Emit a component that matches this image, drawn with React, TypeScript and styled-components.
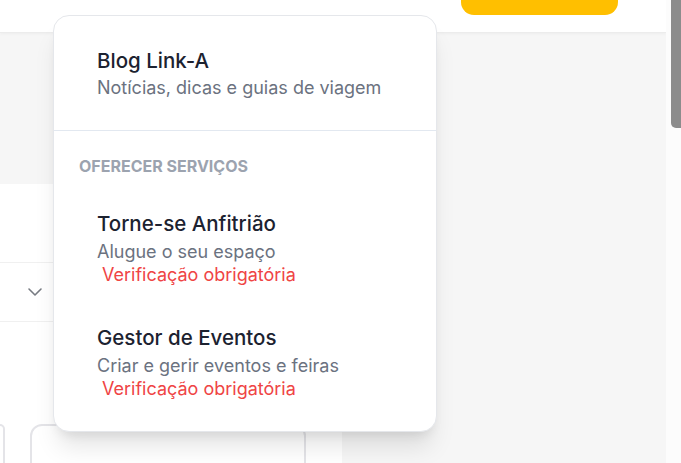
import React from "react";
import styled, { createGlobalStyle } from "styled-components";
import { ChevronDown } from "lucide-react";

const Global = createGlobalStyle`
  html, body { margin: 0; padding: 0; }
  body { font-family: Inter, "Noto Sans", sans-serif; overflow: hidden; }
  * { box-sizing: border-box; }
`;

const Page = styled.div`
  position: relative;
  display: flex;
  width: 681px;
  height: 463px;
  overflow: hidden;
`;

const Main = styled.div`
  flex: 1;
  display: flex;
  flex-direction: column;
  background: #f6f6f6;
`;

const Header = styled.header`
  height: 33px;
  background: #ffffff;
  border-bottom: 1px solid #ececec;
  box-shadow: 0 1px 3px rgba(0, 0, 0, 0.04);
  display: flex;
  justify-content: flex-end;
  padding-right: 48px;
  flex-shrink: 0;
`;

const CtaButton = styled.div`
  width: 157px;
  height: 15px;
  background: #ffbf00;
  border-radius: 0 0 13px 13px;
`;

const Body = styled.div`
  flex: 1;
  padding-top: 151px;
  display: flex;
`;

const Panel = styled.section`
  width: 342px;
  background: #ffffff;
  display: flex;
  flex-direction: column;
`;

const PanelTop = styled.div`
  height: 79px;
  border-bottom: 1px solid #f0f0f0;
`;

const SelectRow = styled.div`
  height: 59px;
  border-bottom: 1px solid #f0f0f0;
  display: flex;
  align-items: center;
  padding-left: 23px;
  color: #777b82;
`;

const CardRow = styled.div`
  display: flex;
  gap: 25px;
  margin-top: 102px;
`;

const Card = styled.div<{ $w: number; $cut?: boolean }>`
  width: ${(p) => p.$w}px;
  height: 60px;
  border: 2px solid #e4e4e8;
  border-left: ${(p) => (p.$cut ? "none" : "2px solid #e4e4e8")};
  border-radius: ${(p) => (p.$cut ? "0 12px 0 0" : "12px")};
  background: #ffffff;
`;

const ScrollTrack = styled.div`
  width: 15px;
  background: #fcfcfc;
  display: flex;
  justify-content: flex-end;
`;

const ScrollThumb = styled.div`
  width: 10px;
  height: 128px;
  background: #8c8c8c;
  border-radius: 0 0 0 5px;
`;

const Dropdown = styled.div`
  position: absolute;
  left: 53px;
  top: 15px;
  width: 384px;
  background: #ffffff;
  border: 1px solid #e5e7eb;
  border-radius: 16px;
  box-shadow: 0 20px 25px -5px rgba(0, 0, 0, 0.1), 0 8px 12px -6px rgba(0, 0, 0, 0.1);
  overflow: hidden;
`;

const BlogItem = styled.div`
  padding: 31px 20px 30px 43px;
`;

const Divider = styled.div`
  height: 1px;
  background: #e2e8f0;
`;

const Section = styled.div`
  padding: 25px 0 12px 0;
`;

const SectionTitle = styled.div`
  padding-left: 25px;
  font-size: 16px;
  line-height: 20px;
  font-weight: 700;
  text-transform: uppercase;
  color: #9ca3af;
  margin-bottom: 15px;
`;

const Item = styled.div`
  padding: 19px 20px 18px 43px;
  display: flex;
  flex-direction: column;
`;

const ItemTitle = styled.div`
  font-size: 20.5px;
  line-height: 28px;
  font-weight: 500;
  color: #1c2230;
  white-space: nowrap;
`;

const ItemSub = styled.div<{ $gap?: number }>`
  margin-top: ${(p) => p.$gap ?? 1}px;
  font-size: 18px;
  line-height: 24px;
  color: #6b7280;
  white-space: nowrap;
`;

const Required = styled.div`
  margin-top: -1px;
  padding-left: 5px;
  font-size: 18px;
  line-height: 24px;
  color: #ef4444;
  white-space: nowrap;
`;

const services = [
  { title: "Torne-se Anfitrião", sub: "Alugue o seu espaço" },
  { title: "Gestor de Eventos", sub: "Criar e gerir eventos e feiras" },
];

export default function App() {
  return (
    <>
      <Global />
      <Page>
        <Main>
          <Header>
            <CtaButton />
          </Header>
          <Body>
            <Panel>
              <PanelTop />
              <SelectRow>
                <ChevronDown size={24} strokeWidth={1.6} />
              </SelectRow>
              <CardRow>
                <Card $w={5} $cut />
                <Card $w={276} />
              </CardRow>
            </Panel>
          </Body>
        </Main>
        <ScrollTrack>
          <ScrollThumb />
        </ScrollTrack>
        <Dropdown>
          <BlogItem>
            <ItemTitle>Blog Link-A</ItemTitle>
            <ItemSub>Notícias, dicas e guias de viagem</ItemSub>
          </BlogItem>
          <Divider />
          <Section>
            <SectionTitle>Oferecer Serviços</SectionTitle>
            {services.map((s) => (
              <Item key={s.title}>
                <ItemTitle>{s.title}</ItemTitle>
                <ItemSub $gap={2}>{s.sub}</ItemSub>
                <Required>Verificação obrigatória</Required>
              </Item>
            ))}
          </Section>
        </Dropdown>
      </Page>
    </>
  );
}
